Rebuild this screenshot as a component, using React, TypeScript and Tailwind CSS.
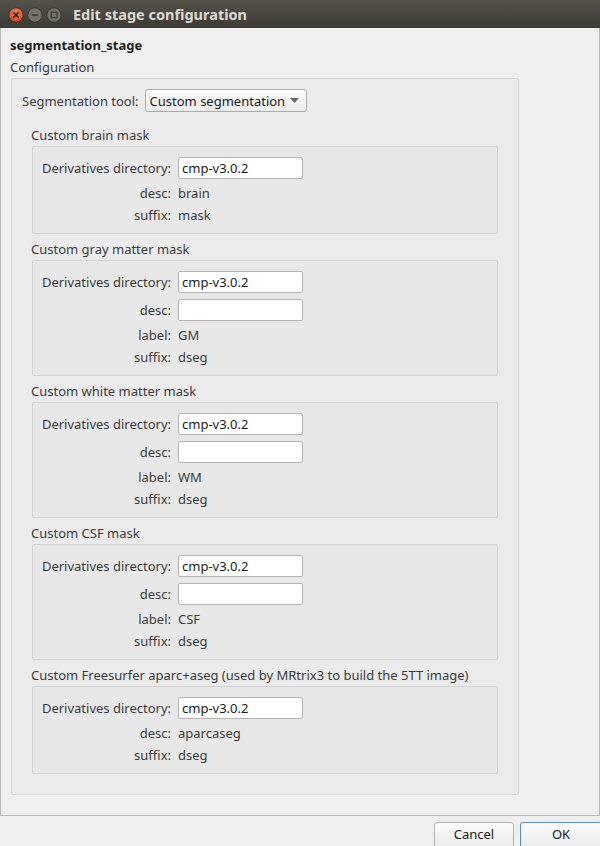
import React from 'react';

const FONT = { fontFamily: '"Noto Sans", "Open Sans", sans-serif' };

function TitleBar() {
  return (
    <div className="h-[28px] flex items-center bg-gradient-to-b from-[#56534b] to-[#3c3b37] pl-[8px] shrink-0">
      <div className="flex items-center gap-[3px] pt-[2px]">
        {/* close */}
        <svg width="16" height="16" viewBox="0 0 16 16">
          <defs>
            <radialGradient id="cl" cx="50%" cy="35%" r="65%">
              <stop offset="0%" stopColor="#f58a5f" />
              <stop offset="100%" stopColor="#d9441a" />
            </radialGradient>
          </defs>
          <circle cx="8" cy="8" r="7.2" fill="url(#cl)" stroke="#2e2c28" strokeWidth="0.8" />
          <path d="M5.6 5.6 L10.4 10.4 M10.4 5.6 L5.6 10.4" stroke="#3a1a0c" strokeWidth="1.5" strokeLinecap="round" />
        </svg>
        {/* minimize */}
        <svg width="16" height="16" viewBox="0 0 16 16">
          <circle cx="8" cy="8" r="7.2" fill="#76736c" stroke="#2e2c28" strokeWidth="0.8" />
          <path d="M4.8 8 L11.2 8" stroke="#3c3b37" strokeWidth="1.6" />
        </svg>
        {/* maximize */}
        <svg width="16" height="16" viewBox="0 0 16 16">
          <circle cx="8" cy="8" r="7.2" fill="#76736c" stroke="#2e2c28" strokeWidth="0.8" />
          <rect x="5.2" y="5.2" width="5.6" height="5.6" fill="none" stroke="#3c3b37" strokeWidth="1.3" />
        </svg>
      </div>
      <div className="ml-[11px] text-[14.5px] font-bold text-[#dfdbd2] leading-none whitespace-nowrap">Edit stage configuration</div>
    </div>
  );
}

function TextInput({ value }: { value?: string }) {
  return (
    <div className="w-[125px] h-[22px] bg-white border border-[#b2b2b2] rounded-[2px] flex items-center px-[3px] text-[#1a1a1a] whitespace-nowrap">
      {value}
    </div>
  );
}

type Row = { label: string; value?: string; input?: boolean };

function Section({ title, rows }: { title: string; rows: Row[] }) {
  return (
    <div className="flex flex-col">
      <div className="h-[16px] leading-[16px] mb-[3px] -ml-[1px] whitespace-nowrap">{title}</div>
      <div className="border border-[#d2d2d2] rounded-[2px] bg-[#e8e8e8] pt-[10px] pb-[10px] pl-[10px] flex flex-col gap-[6px]">
        {rows.map((r) => (
          <div key={r.label} className={`flex items-center ${r.input ? 'h-[22px]' : 'h-[16px]'}`}>
            <div className="w-[128px] shrink-0 flex justify-end">
              <span className="whitespace-nowrap shrink-0">{r.label}</span>
            </div>
            <div className="ml-[7px] whitespace-nowrap">{r.input ? <TextInput value={r.value} /> : r.value}</div>
          </div>
        ))}
      </div>
    </div>
  );
}

const sections: { title: string; rows: Row[] }[] = [
  {
    title: 'Custom brain mask',
    rows: [
      { label: 'Derivatives directory:', value: 'cmp-v3.0.2', input: true },
      { label: 'desc:', value: 'brain' },
      { label: 'suffix:', value: 'mask' },
    ],
  },
  {
    title: 'Custom gray matter mask',
    rows: [
      { label: 'Derivatives directory:', value: 'cmp-v3.0.2', input: true },
      { label: 'desc:', value: '', input: true },
      { label: 'label:', value: 'GM' },
      { label: 'suffix:', value: 'dseg' },
    ],
  },
  {
    title: 'Custom white matter mask',
    rows: [
      { label: 'Derivatives directory:', value: 'cmp-v3.0.2', input: true },
      { label: 'desc:', value: '', input: true },
      { label: 'label:', value: 'WM' },
      { label: 'suffix:', value: 'dseg' },
    ],
  },
  {
    title: 'Custom CSF mask',
    rows: [
      { label: 'Derivatives directory:', value: 'cmp-v3.0.2', input: true },
      { label: 'desc:', value: '', input: true },
      { label: 'label:', value: 'CSF' },
      { label: 'suffix:', value: 'dseg' },
    ],
  },
  {
    title: 'Custom Freesurfer aparc+aseg (used by MRtrix3 to build the 5TT image)',
    rows: [
      { label: 'Derivatives directory:', value: 'cmp-v3.0.2', input: true },
      { label: 'desc:', value: 'aparcaseg' },
      { label: 'suffix:', value: 'dseg' },
    ],
  },
];

export default function App() {
  return (
    <div
      className="w-[600px] h-[846px] overflow-hidden bg-[#efefef] flex flex-col text-[13px] text-[#3c3c3c]"
      style={FONT}
    >
      <TitleBar />

      {/* scroll area frame */}
      <div className="h-[788px] border-l border-r border-b border-[#b9b9b9] pl-[9px] pt-[9px] shrink-0">
        <div className="h-[16px] leading-[16px] font-bold text-[#1e1e1e]">segmentation_stage</div>
        <div className="h-[16px] leading-[16px] mt-[6px]">Configuration</div>

        <div className="mt-[3px] ml-[1px] w-[508px] border border-[#d4d4d4] rounded-[2px] bg-[#ebebeb] pt-[10px] pb-[20px] px-[10px] leading-[16px]">
          <div className="flex items-center h-[23px]">
            <span className="whitespace-nowrap">Segmentation tool:</span>
            <div className="ml-[6px] w-[162px] h-[23px] border border-[#ababab] rounded-[3px] bg-gradient-to-b from-[#fafafa] to-[#ececec] flex items-center pl-[4px] pr-[7px] text-[#1a1a1a]">
              <span className="flex-1 whitespace-nowrap">Custom segmentation</span>
              <svg width="9" height="5" viewBox="0 0 9 5">
                <path d="M0 0 L9 0 L4.5 5 Z" fill="#6a6a6a" />
              </svg>
            </div>
          </div>

          <div className="mx-[10px] mt-[15px] flex flex-col gap-[7px]">
            {sections.map((s) => (
              <Section key={s.title} title={s.title} rows={s.rows} />
            ))}
          </div>
        </div>
      </div>

      {/* button bar */}
      <div className="flex pt-[6px] pl-[434px] gap-[6px] shrink-0">
        <button className="w-[80px] h-[26px] shrink-0 border border-[#b0b0b0] rounded-[3px] bg-gradient-to-b from-[#fbfbfb] to-[#ebebeb] text-[#1a1a1a]">
          Cancel
        </button>
        <button className="w-[82px] h-[26px] shrink-0 border border-[#5b8cb8] rounded-[3px] bg-gradient-to-b from-[#fbfbfb] to-[#ebebeb] text-[#1a1a1a]">
          OK
        </button>
      </div>
    </div>
  );
}
